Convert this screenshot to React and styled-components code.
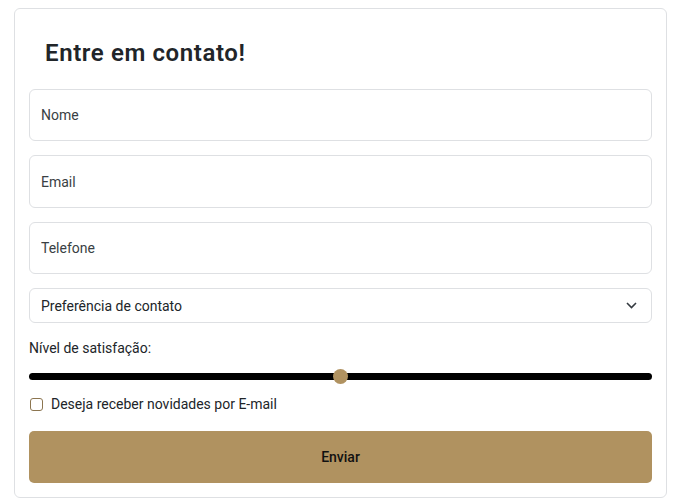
import React from "react";
import styled, { createGlobalStyle } from "styled-components";

const Global = createGlobalStyle`
  body {
    margin: 0;
    background: #fff;
    font-family: Roboto, "Liberation Sans", sans-serif;
    color: #212529;
  }
  * { box-sizing: border-box; }
`;

const Page = styled.div`
  padding: 8px 14px 5px 14px;
`;

const Card = styled.form`
  border: 1px solid #dee0e3;
  border-radius: 6px;
  padding: 0 14px 14px 14px;
  display: flex;
  flex-direction: column;
`;

const Title = styled.h2`
  margin: 0;
  padding: 30px 0 0 16px;
  height: 80px;
  font-size: 24px;
  font-weight: 600;
  letter-spacing: 0.6px;
  color: #212529;
`;

const Field = styled.input`
  height: ${(p) => p.$h || 52}px;
  margin-bottom: 14px;
  border: 1px solid #dee0e3;
  border-radius: 6px;
  padding: 0 11px;
  font-family: inherit;
  font-size: 14px;
  color: #212529;
  outline: none;
  &::placeholder { color: #3a3f44; }
`;

const SelectWrap = styled.div`
  position: relative;
  margin-bottom: 15px;
`;

const Select = styled.select`
  width: 100%;
  height: 35px;
  appearance: none;
  border: 1px solid #dee0e3;
  border-radius: 6px;
  padding: 0 11px;
  background: #fff;
  font-family: inherit;
  font-size: 14px;
  color: #212529;
`;

const Chevron = styled.svg`
  position: absolute;
  right: 15px;
  top: 14px;
  pointer-events: none;
`;

const Label = styled.label`
  font-size: 14px;
  line-height: 20px;
  color: #212529;
`;

const Range = styled.input`
  appearance: none;
  -webkit-appearance: none;
  width: 100%;
  height: 16px;
  margin: 10px 0 0 0;
  background: transparent;
  &::-webkit-slider-runnable-track {
    height: 7px;
    border-radius: 4px;
    background: #000;
  }
  &::-webkit-slider-thumb {
    -webkit-appearance: none;
    width: 15px;
    height: 15px;
    border-radius: 50%;
    background: #b09260;
    margin-top: -4px;
    border: none;
  }
`;

const CheckRow = styled.label`
  display: flex;
  align-items: center;
  gap: 8px;
  margin: 12px 0 19px 1px;
  font-size: 14px;
  color: #212529;
`;

const Box = styled.input`
  appearance: none;
  -webkit-appearance: none;
  width: 13px;
  height: 13px;
  margin: 0;
  border: 1px solid #8c7550;
  border-radius: 3px;
  background: #fff;
`;

const Button = styled.button`
  height: 52px;
  border: none;
  border-radius: 5px;
  background: #b09260;
  font-family: inherit;
  font-size: 14px;
  font-weight: 500;
  color: #111;
`;

export default function App() {
  return (
    <>
      <Global />
      <Page>
        <Card onSubmit={(e) => e.preventDefault()}>
          <Title>Entre em contato!</Title>
          <Field placeholder="Nome" />
          <Field placeholder="Email" $h={53} />
          <Field placeholder="Telefone" />
          <SelectWrap>
            <Select defaultValue="">
              <option value="">Preferência de contato</option>
              <option>Email</option>
              <option>Telefone</option>
            </Select>
            <Chevron width="11" height="7" viewBox="0 0 11 7">
              <path d="M1 1l4.5 4.5L10 1" fill="none" stroke="#343a40" strokeWidth="1.6" />
            </Chevron>
          </SelectWrap>
          <Label>Nível de satisfação:</Label>
          <Range type="range" min="0" max="100" defaultValue="50" />
          <CheckRow>
            <Box type="checkbox" />
            Deseja receber novidades por E-mail
          </CheckRow>
          <Button type="submit">Enviar</Button>
        </Card>
      </Page>
    </>
  );
}
